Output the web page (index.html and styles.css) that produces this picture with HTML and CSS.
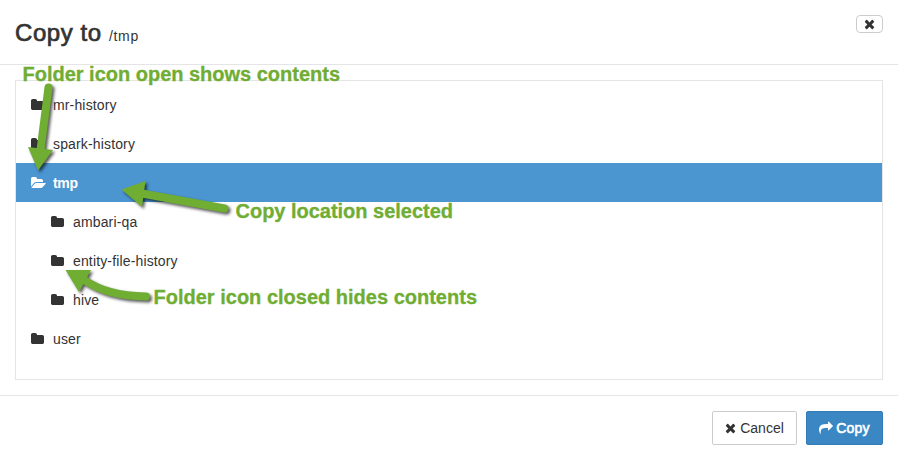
FILE: index.html
```html
<!DOCTYPE html>
<html lang="en">
<head>
<meta charset="utf-8">
<title>Copy to</title>
<link rel="stylesheet" href="styles.css">
</head>
<body>
<svg class="sprite" aria-hidden="true">
  <symbol id="folder" viewBox="0 0 1664 1792"><path d="M1664 608v704q0 92-66 158t-158 66h-1216q-92 0-158-66t-66-158v-960q0-92 66-158t158-66h320q92 0 158 66t66 158v32h672q92 0 158 66t66 158z"/></symbol>
  <symbol id="folder-open" viewBox="0 0 1920 1792"><path d="M1879 952q0 31-31 66l-336 396q-43 51-120.500 86.500t-143.500 35.500h-1088q-34 0-60.500-13t-26.500-43q0-31 31-66l336-396q43-51 120.500-86.500t143.500-35.500h1088q34 0 60.500 13t26.500 43zm-343-344v160h-832q-94 0-197 47.500t-164 119.500l-337 396-5 6q0-4-.5-12.500t-.5-12.500v-960q0-92 66-158t158-66h320q92 0 158 66t66 158v32h544q92 0 158 66t66 158z"/></symbol>
  <symbol id="times" viewBox="192 0 1408 1792"><path d="M1490 1322q0 40-28 68l-136 136q-28 28-68 28t-68-28l-294-294-294 294q-28 28-68 28t-68-28l-136-136q-28-28-28-68t28-68l294-294-294-294q-28-28-28-68t28-68l136-136q28-28 68-28t68 28l294 294 294-294q28-28 68-28t68 28l136 136q28 28 28 68t-28 68l-294 294 294 294q28 28 28 68z"/></symbol>
  <symbol id="share" viewBox="0 0 1792 1792"><path d="M1792 640q0 26-19 45l-512 512q-19 19-45 19t-45-19-19-45v-256h-224q-98 0-175.500 6t-154 21.500-133 42.500-105.500 69.500-80 101-48.500 138.500-17.500 181q0 55 5 123 0 6 2.500 23.500t2.500 26.500q0 15-8.500 25t-23.500 10q-16 0-28-17-7-9-13-22t-13.500-30-10.500-24q-127-285-127-451 0-199 53-333 162-403 875-403h224v-256q0-26 19-45t45-19 45 19l512 512q19 19 19 45z"/></symbol>
</svg>
<div class="modal">
  <header class="modal-header">
    <h1 class="title">Copy to <small class="path">/tmp</small></h1>
    <button class="close" aria-label="Close"><svg class="icon-times"><use href="#times"/></svg></button>
  </header>
  <main class="modal-body">
    <ul class="tree">
      <li class="row"><svg class="icon"><use href="#folder"/></svg><span>mr-history</span></li>
      <li class="row"><svg class="icon"><use href="#folder"/></svg><span>spark-history</span></li>
      <li class="row selected"><svg class="icon open"><use href="#folder-open"/></svg><span>tmp</span></li>
      <li class="row child"><svg class="icon"><use href="#folder"/></svg><span>ambari-qa</span></li>
      <li class="row child"><svg class="icon"><use href="#folder"/></svg><span>entity-file-history</span></li>
      <li class="row child"><svg class="icon"><use href="#folder"/></svg><span>hive</span></li>
      <li class="row"><svg class="icon"><use href="#folder"/></svg><span>user</span></li>
    </ul>
  </main>
  <footer class="modal-footer">
    <button class="btn cancel"><svg class="icon-times"><use href="#times"/></svg><span>Cancel</span></button>
    <button class="btn primary"><svg class="icon-share"><use href="#share"/></svg><span>Copy</span></button>
  </footer>
</div>
<svg class="annotations" viewBox="0 0 898 460">
  <g class="arrow">
    <path class="shaft" d="M48.500 87.500L40.500 150"/>
    <path class="head" d="M28 147L53 150L38 170.500Z"/>
  </g>
  <g class="arrow">
    <path class="shaft" d="M224.500 208.500L142 193.500"/>
    <path class="head" d="M121.500 189.500L145.500 181L142 207Z"/>
  </g>
  <g class="arrow">
    <path class="shaft" d="M146 296.500C119 296 101 291 84 280"/>
    <path class="head" d="M65.500 270L91 270L79 292Z"/>
  </g>
  <text class="note" x="22.500" y="81" textLength="317.500">Folder icon open shows contents</text>
  <text class="note" x="235.500" y="218" textLength="217.500">Copy location selected</text>
  <text class="note" x="153.500" y="304" textLength="323.500">Folder icon closed hides contents</text>
</svg>
</body>
</html>
```
FILE: styles.css
```css
* { box-sizing: border-box; }
body {
  margin: 0;
  background: #fff;
  color: #333;
  font: 14px/20px "Liberation Sans", Arial, sans-serif;
}
.sprite { position: absolute; width: 0; height: 0; }
svg { fill: currentColor; flex: none; }
.modal { height: 460px; display: flex; flex-direction: column; }
.modal-header {
  height: 65px;
  padding: 15px;
  display: flex;
  justify-content: space-between;
  align-items: flex-start;
  border-bottom: 1px solid #e5e5e5;
}
.title {
  margin: 0;
  font-size: 24px;
  line-height: 35px;
  font-weight: 400;
  letter-spacing: 0.58px;
  -webkit-text-stroke: 0.7px #333;
}
.path { font-size: 14px; letter-spacing: 0.65px; -webkit-text-stroke: 0; }
.close {
  width: 27px;
  height: 18px;
  padding: 0;
  display: flex;
  align-items: center;
  justify-content: center;
  color: #333;
  background: #fff;
  border: 1px solid #ccc;
  border-radius: 4px;
}
.icon-times { width: 11px; height: 14px; }
.modal-body { padding: 15px; }
.tree {
  height: 300px;
  margin: 0;
  padding: 4px 0;
  list-style: none;
  border: 1px solid #e5e5e5;
}
.row {
  height: 39px;
  padding-left: 15px;
  display: flex;
  align-items: center;
  gap: 9px;
  letter-spacing: 0.15px;
}
.child { padding-left: 35px; }
.icon { width: 13px; height: 14px; }
.icon.open { width: 15px; margin-right: -2px; }
.selected { color: #fff; background: #4b95d1; font-weight: 700; letter-spacing: -0.3px; }
.modal-footer {
  flex: 1;
  padding: 15px;
  display: flex;
  justify-content: flex-end;
  align-items: flex-start;
  gap: 9px;
  border-top: 1px solid #e5e5e5;
}
.btn {
  height: 34px;
  padding: 0;
  display: flex;
  justify-content: center;
  align-items: center;
  gap: 4px;
  border-radius: 2px;
  font: inherit;
}
.cancel { width: 85px; color: #333; background: #fff; border: 1px solid #ccc; }
.primary {
  width: 77px;
  gap: 3px;
  color: #fff;
  background: #3a87c4;
  border: 1px solid #337ab7;
  letter-spacing: 0.2px;
  -webkit-text-stroke: 0.6px #fff;
}
.icon-share { width: 14px; height: 14px; }
.annotations { position: absolute; top: 0; left: 0; width: 898px; height: 460px; pointer-events: none; }
.arrow { color: #70ad33; filter: drop-shadow(2px 2px 1.5px rgba(0, 0, 0, 0.65)); }
.shaft { fill: none; stroke: currentColor; stroke-width: 8px; stroke-linecap: round; }
.note { fill: #70ad33; font-size: 20px; font-weight: 700; stroke: #70ad33; stroke-width: 0.3px; }
```
